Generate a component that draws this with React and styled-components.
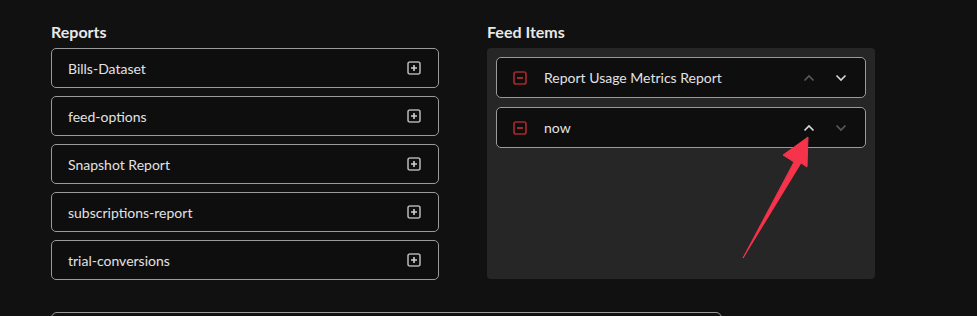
import React from "react";
import styled, { createGlobalStyle } from "styled-components";

const GlobalStyle = createGlobalStyle`
  html, body {
    margin: 0;
    background: #111111;
    font-family: Lato, "Open Sans", sans-serif;
    color: #e6e6e6;
  }
`;

const Page = styled.div`
  position: relative;
  width: 977px;
  height: 316px;
  overflow: hidden;
  padding: 22px 0 0 51px;
  box-sizing: border-box;
`;

const Columns = styled.div`
  display: grid;
  grid-template-columns: 388px 388px;
  column-gap: 48px;
`;

const Heading = styled.h2`
  margin: 0 0 6px;
  font-size: 16px;
  line-height: 20px;
  font-weight: 700;
  color: #e8e8e8;
`;

const List = styled.div`
  display: flex;
  flex-direction: column;
  gap: 8px;
`;

const ReportRow = styled.div`
  display: flex;
  align-items: center;
  justify-content: space-between;
  height: 40px;
  box-sizing: border-box;
  padding: 0 17px 0 16px;
  border: 1px solid #9a9a9a;
  border-radius: 5px;
  background: #0e0e0e;
  font-size: 14px;
  color: #e2e2e2;
`;

const Panel = styled.div`
  background: #262626;
  border-radius: 4px;
  padding: 9px;
  height: 231px;
  box-sizing: border-box;
  display: flex;
  flex-direction: column;
  gap: 9px;
`;

const FeedRow = styled.div`
  display: flex;
  align-items: center;
  height: 41px;
  box-sizing: border-box;
  padding: 0 18px 0 16px;
  border: 1px solid #9a9a9a;
  border-radius: 5px;
  background: #0e0e0e;
  font-size: 14px;
  color: #e2e2e2;
`;

const FeedLabel = styled.span`
  flex: 1;
  margin-left: 17px;
`;

const Arrows = styled.div`
  display: flex;
  gap: 20px;
  align-items: center;
`;

const Bottom = styled.div`
  margin-top: 32px;
  width: 671px;
  height: 40px;
  border: 1px solid #9a9a9a;
  border-radius: 6px;
  box-sizing: border-box;
`;

const Overlay = styled.svg`
  position: absolute;
  left: 0;
  top: 0;
  pointer-events: none;
`;

const PlusBox = () => (
  <svg width="14" height="14" viewBox="0 0 14 14">
    <rect x="1" y="1" width="12" height="12" rx="2" fill="none" stroke="#b0b0b0" strokeWidth="1.6" />
    <path d="M7 4v6M4 7h6" stroke="#d0d0d0" strokeWidth="1.6" />
  </svg>
);

const MinusBox = () => (
  <svg width="14" height="14" viewBox="0 0 14 14">
    <rect x="1" y="1" width="12" height="12" rx="2" fill="none" stroke="#a3282c" strokeWidth="1.7" />
    <path d="M4 7h6" stroke="#b83035" strokeWidth="1.7" />
  </svg>
);

const Chevron = ({ up, active }) => (
  <svg width="12" height="8" viewBox="0 0 12 8">
    <path
      d={up ? "M1.5 6.5L6 2l4.5 4.5" : "M1.5 1.5L6 6l4.5-4.5"}
      fill="none"
      stroke={active ? "#d8d8d8" : "#5a5a5a"}
      strokeWidth="1.6"
    />
  </svg>
);

const reports = ["Bills-Dataset", "feed-options", "Snapshot Report", "subscriptions-report", "trial-conversions"];

const feed = [
  { label: "Report Usage Metrics Report", upActive: false, downActive: true },
  { label: "now", upActive: true, downActive: false },
];

export default function App() {
  return (
    <Page>
      <GlobalStyle />
      <Columns>
        <div>
          <Heading>Reports</Heading>
          <List>
            {reports.map((r) => (
              <ReportRow key={r}>
                <span>{r}</span>
                <PlusBox />
              </ReportRow>
            ))}
          </List>
        </div>
        <div>
          <Heading>Feed Items</Heading>
          <Panel>
            {feed.map((f) => (
              <FeedRow key={f.label}>
                <MinusBox />
                <FeedLabel>{f.label}</FeedLabel>
                <Arrows>
                  <Chevron up active={f.upActive} />
                  <Chevron active={f.downActive} />
                </Arrows>
              </FeedRow>
            ))}
          </Panel>
        </div>
      </Columns>
      <Bottom />
      <Overlay width="977" height="316">
        <path
          d="M743 258 L794 162 L783 155 L808 137 L807 167 L801 163 Z"
          fill="#f5334a"
          stroke="#f5334a"
          strokeWidth="1"
          strokeLinejoin="round"
        />
      </Overlay>
    </Page>
  );
}
